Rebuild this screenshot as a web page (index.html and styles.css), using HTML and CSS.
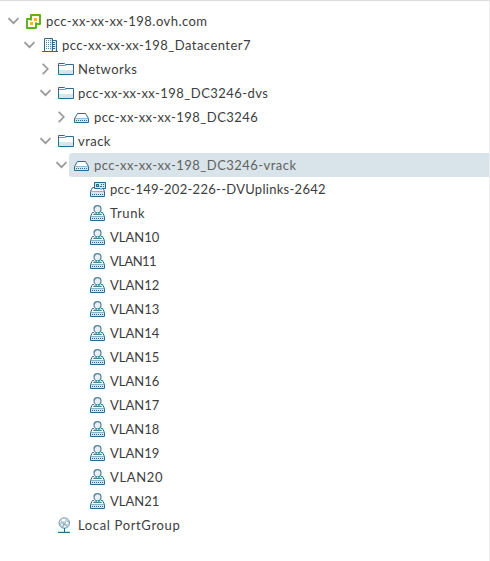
FILE: index.html
```html
<!DOCTYPE html>
<html lang="en">
<head>
<meta charset="utf-8">
<title>Networking inventory</title>
<link rel="stylesheet" href="styles.css">
</head>
<body>
<svg class="defs" aria-hidden="true">
  <symbol id="down" viewBox="0 0 12 12"><path class="arrow" d="M.5 3.200 5.500 8.200l5-5"/></symbol>
  <symbol id="right" viewBox="0 0 12 12"><path class="arrow" d="M2.700.9 7.800 6l-5.100 5.100"/></symbol>
  <symbol id="vcenter" viewBox="0 0 16 16">
    <path fill="none" stroke="#60b515" stroke-width="2" stroke-linejoin="round" d="M5 6V2h9v9h-4v4H1V6h4v1.500M10 11V9.500"/>
    <path fill="#fdb32b" d="M8 5h3v3H8zM4 9h3v3H4z"/>
  </symbol>
  <symbol id="datacenter" viewBox="0 0 16 16">
    <path fill="#fff" stroke="#2f6a89" d="M2.500 14.500v-13h8v13M10.500 3.500h4v11"/>
    <path fill="#d9e4ea" d="M8 2h2v12H8zM13 4h1v10h-1z"/>
    <path stroke="#5b8aa3" stroke-dasharray="1 1" d="M4 3.500h5M4 5.500h5M4 7.500h5M4 9.500h5M4 11.500h5"/>
    <path stroke="#2f6a89" d="M11 5.500h2M11 7.500h2M11 9.500h2M11 11.500h2M0 14.500h16"/>
  </symbol>
  <symbol id="folder" viewBox="0 0 16 16">
    <path fill="#fff" stroke="#2f6a89" d="M.5 13.500v-11h6l1 1h8v10z"/>
    <path fill="#d9e4ea" d="M1 9h14v4H1z"/>
    <path fill="none" stroke="#6d9bb3" d="M1 4.500h6.500v-1"/>
  </symbol>
  <symbol id="switch" viewBox="0 0 16 16">
    <path fill="#fff" stroke="#2f6a89" stroke-linejoin="round" d="M3.500 4.500h8l3 5v4H.5v-4z"/>
    <path fill="#d9e4ea" d="M1 9h13v4H1z"/>
    <path stroke="#9ab9c9" d="M1 9.500h13"/>
    <path stroke="#2f6a89" stroke-dasharray="1 1" d="M2 11.500h11"/>
  </symbol>
  <symbol id="uplink" viewBox="0 0 16 16">
    <path fill="#fff" stroke="#2f6a89" stroke-linejoin="round" d="M4 6.500H2.500l-2 4v5h14v-5l-1-2.500"/>
    <path fill="#d9e4ea" d="M1 11h13v4H1z"/>
    <path stroke="#8fb1c2" d="M1 10.500h13"/>
    <path stroke="#2f6a89" stroke-dasharray="1 1" d="M2 13.500h11"/>
    <path fill="#d9e4ea" stroke="#2f6a89" d="M4.500 1.500h11v6H12l-1 1-1-1H4.500z"/>
    <path fill="#2f6a89" d="M6 3h3v3H6zM11 3h1v1h-1zM13 3h1v1h-1zM10 5h2v1h-2zM13 5h1v1h-1z"/>
    <path fill="#b5cbd6" d="M7 4h1v1H7z"/>
  </symbol>
  <symbol id="portgroup" viewBox="0 0 16 16">
    <path fill="#fff" stroke="#2f6a89" stroke-linejoin="round" d="M4 7.500H2.500l-2 4v4h14v-4l-2-4H11"/>
    <path fill="#d9e4ea" d="M1 12h13v3H1z"/>
    <path stroke="#8fb1c2" d="M1 11.500h13"/>
    <path stroke="#2f6a89" stroke-dasharray="1 1" d="M2 13.500h11"/>
    <circle cx="7.500" cy="4.200" r="3.500" fill="#e8f0f4" stroke="#4b819d" stroke-width="1.200"/>
    <path fill="#d9e4ea" stroke="#4b819d" d="M6.500 7.500v1l-3 1h8l-3-1v-1"/>
  </symbol>
  <symbol id="network" viewBox="0 0 16 16">
    <circle cx="6.300" cy="6" r="5.300" fill="#c5d8e1" stroke="#7ea2b5"/>
    <path fill="none" stroke="#7ea2b5" stroke-width=".7" d="m2 4 4 3 5-3M6 7l-2 4M6 7l4 3M1 8l5-1"/>
    <path fill="#fff" d="M4 2h3v2H4zM8 5h2v2H8zM3 7h2v1H3zM6 9h2v1H6zM2 4h1v1H2z"/>
    <path fill="none" stroke="#2f6a89" d="M6.500 11v4"/>
    <path stroke="#2f6a89" stroke-width="1.200" d="M0 15.400h12"/>
  </symbol>
</svg>
<main class="tree">
  <div class="row"><svg class="chevron"><use href="#down"/></svg><svg class="icon"><use href="#vcenter"/></svg><span>pcc-xx-xx-xx-198.ovh.com</span></div>
  <div class="row l1"><svg class="chevron"><use href="#down"/></svg><svg class="icon"><use href="#datacenter"/></svg><span>pcc-xx-xx-xx-198_Datacenter7</span></div>
  <div class="row l2"><svg class="chevron"><use href="#right"/></svg><svg class="icon"><use href="#folder"/></svg><span>Networks</span></div>
  <div class="row l2"><svg class="chevron"><use href="#down"/></svg><svg class="icon"><use href="#folder"/></svg><span>pcc-xx-xx-xx-198_DC3246-dvs</span></div>
  <div class="row l3"><svg class="chevron"><use href="#right"/></svg><svg class="icon"><use href="#switch"/></svg><span>pcc-xx-xx-xx-198_DC3246</span></div>
  <div class="row l2"><svg class="chevron"><use href="#down"/></svg><svg class="icon"><use href="#folder"/></svg><span>vrack</span></div>
  <div class="row l3"><svg class="chevron"><use href="#down"/></svg><div class="selected"><svg class="icon"><use href="#switch"/></svg><span>pcc-xx-xx-xx-198_DC3246-vrack</span></div></div>
  <div class="row l4 leaf uplinks"><svg class="icon"><use href="#uplink"/></svg><span>pcc-149-202-226--DVUplinks-2642</span></div>
  <div class="row l4 leaf wide"><svg class="icon"><use href="#portgroup"/></svg><span>Trunk</span></div>
  <div class="row l4 leaf vlan"><svg class="icon"><use href="#portgroup"/></svg><span>VLAN10</span></div>
  <div class="row l4 leaf vlan narrow"><svg class="icon"><use href="#portgroup"/></svg><span>VLAN11</span></div>
  <div class="row l4 leaf vlan"><svg class="icon"><use href="#portgroup"/></svg><span>VLAN12</span></div>
  <div class="row l4 leaf vlan"><svg class="icon"><use href="#portgroup"/></svg><span>VLAN13</span></div>
  <div class="row l4 leaf vlan"><svg class="icon"><use href="#portgroup"/></svg><span>VLAN14</span></div>
  <div class="row l4 leaf vlan"><svg class="icon"><use href="#portgroup"/></svg><span>VLAN15</span></div>
  <div class="row l4 leaf vlan"><svg class="icon"><use href="#portgroup"/></svg><span>VLAN16</span></div>
  <div class="row l4 leaf vlan"><svg class="icon"><use href="#portgroup"/></svg><span>VLAN17</span></div>
  <div class="row l4 leaf vlan"><svg class="icon"><use href="#portgroup"/></svg><span>VLAN18</span></div>
  <div class="row l4 leaf vlan"><svg class="icon"><use href="#portgroup"/></svg><span>VLAN19</span></div>
  <div class="row l4 leaf wide"><svg class="icon"><use href="#portgroup"/></svg><span>VLAN20</span></div>
  <div class="row l4 leaf vlan"><svg class="icon"><use href="#portgroup"/></svg><span>VLAN21</span></div>
  <div class="row l2 leaf wide"><svg class="icon"><use href="#network"/></svg><span>Local PortGroup</span></div>
</main>
</body>
</html>
```
FILE: styles.css
```css
* { box-sizing: border-box; }
body { margin: 0; background: #fff; }
.defs { display: none; }
.tree {
  height: 561px;
  padding-top: 8px;
  border-top: 1px solid #ddd;
  border-right: 1px solid #eee;
  font: 13px/24px Lato, "Open Sans", sans-serif;
  letter-spacing: .46px;
  color: #3d3d3d;
}
.row { display: flex; align-items: center; height: 24px; padding-left: 8px; white-space: nowrap; }
.l1 { padding-left: 24px; }
.l2 { padding-left: 40px; }
.l3 { padding-left: 56px; }
.l4 { padding-left: 72px; }
.uplinks { letter-spacing: .28px; }
.wide { letter-spacing: .65px; }
.vlan { letter-spacing: .02px; }
.narrow { letter-spacing: -.55px; }
.chevron { width: 12px; height: 12px; margin-right: 6px; flex: none; }
.icon { width: 16px; height: 16px; margin-right: 4px; flex: none; }
.leaf::before { content: ""; width: 18px; flex: none; }
.arrow { fill: none; stroke: #999; stroke-width: 1.7; }
.selected {
  display: flex;
  flex: 1;
  align-items: center;
  height: 24px;
  margin-left: -5px;
  padding-left: 5px;
  border-radius: 3px 0 0 3px;
  background: #d9e4ea;
  color: #626262;
}
```
